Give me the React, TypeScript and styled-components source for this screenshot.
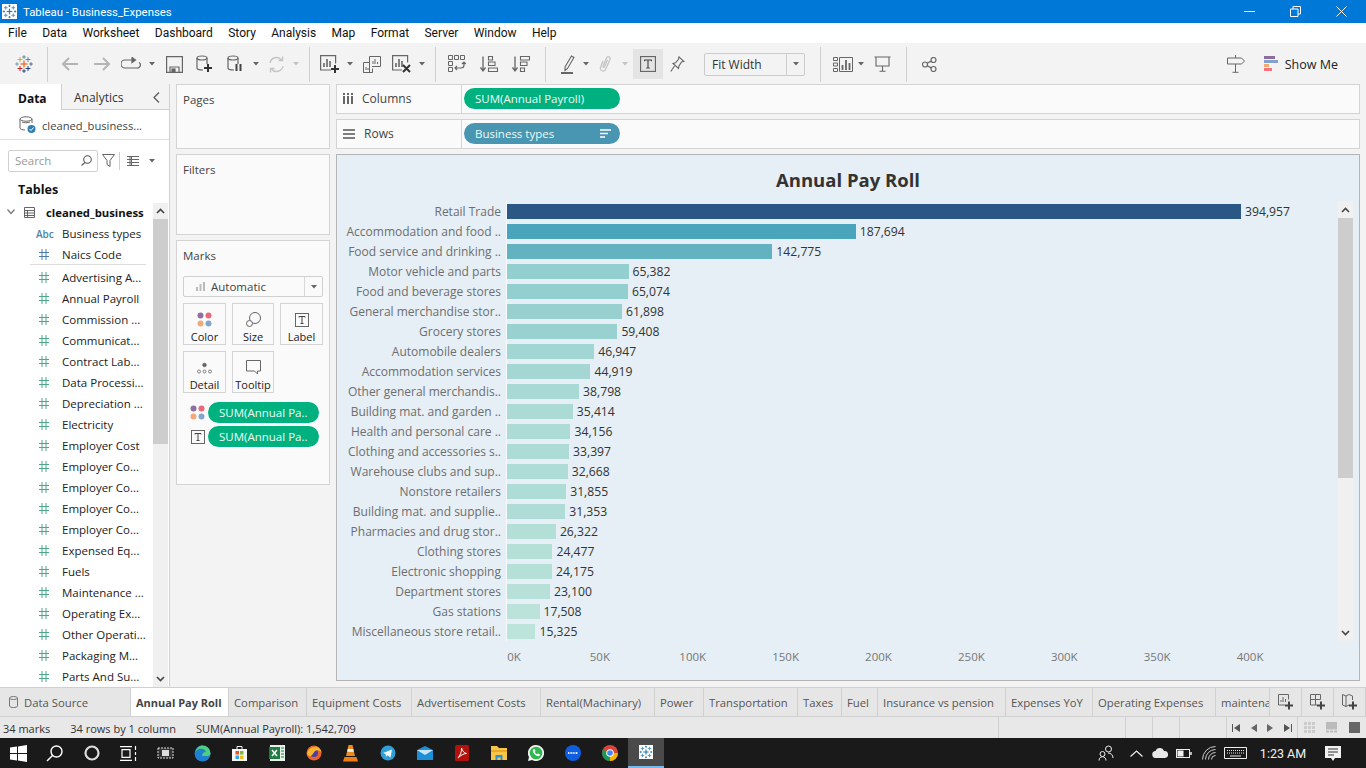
import * as React from 'react';
import styled, { createGlobalStyle } from 'styled-components';

const UI_FONT = `"Open Sans", "Noto Sans", "Liberation Sans", sans-serif`;
const SYSTEM_FONT = `Roboto, "Open Sans", "Liberation Sans", sans-serif`;

const GlobalStyle = createGlobalStyle`
  html, body { margin: 0; padding: 0; width: 1366px; height: 768px; overflow: hidden; }
  body { font-family: ${UI_FONT}; font-size: 12px; color: #333; }
  * { box-sizing: border-box; }
`;

const Page = styled.div`
  width: 1366px;
  height: 768px;
  display: flex;
  flex-direction: column;
  background: #f3f3f3;
  overflow: hidden;
`;

/* ---- title bar ---- */
const TitleBar = styled.div`
  height: 23px;
  flex: none;
  background: #0078d7;
  color: #fff;
  display: flex;
  align-items: center;
  padding: 0 2px;
  font-family: ${SYSTEM_FONT};
  font-size: 11.4px;
`;
const TitleText = styled.span`
  margin-left: 6px;
  flex: 1;
`;
const WinButton = styled.div`
  width: 46px;
  height: 23px;
  display: flex;
  align-items: center;
  justify-content: center;
`;

/* ---- menu ---- */
const MenuBar = styled.div`
  height: 20px;
  flex: none;
  background: #fff;
  display: flex;
  align-items: center;
  gap: 15.4px;
  padding-left: 8px;
  color: #111;
  font-family: ${SYSTEM_FONT};
  font-size: 12px;
`;

/* ---- toolbar ---- */
const Toolbar = styled.div`
  height: 41px;
  flex: none;
  display: flex;
  align-items: center;
  background: #f3f3f3;
  padding-top: 1px;
`;
const Tool = styled.div<{ $w: number; $ml?: number; $on?: boolean }>`
  width: ${p => p.$w}px;
  height: 30px;
  flex: none;
  margin-left: ${p => p.$ml ?? 0}px;
  display: flex;
  align-items: center;
  justify-content: center;
  background: ${p => (p.$on ? '#e4e4e4' : 'transparent')};
`;
const ToolSep = styled.div<{ $ml?: number }>`
  width: 1px;
  height: 35px;
  flex: none;
  margin-left: ${p => p.$ml ?? 0}px;
  background: #d0d0d0;
`;
const SearchSep = styled(ToolSep)`
  height: 18px;
`;
const FitSelect = styled.div`
  width: 101px;
  height: 23px;
  flex: none;
  margin-left: 13px;
  border: 1px solid #ccc;
  border-radius: 2px;
  display: flex;
  align-items: center;
  justify-content: space-between;
  padding-left: 7px;
  color: #333;
  font-size: 12px;
`;
const FitArrow = styled.div`
  width: 18px;
  height: 21px;
  border-left: 1px solid #ccc;
  display: flex;
  align-items: center;
  justify-content: center;
`;
const ToolRight = styled.div`
  margin-left: auto;
  display: flex;
  align-items: center;
  padding-right: 28px;
`;
const ShowMe = styled.div`
  margin-left: 14px;
  display: flex;
  align-items: center;
  gap: 6px;
  color: #222;
  font-size: 12.5px;
`;

/* ---- main ---- */
const Main = styled.div`
  height: 603px;
  flex: none;
  display: flex;
`;
const DataPane = styled.div`
  width: 170px;
  flex: none;
  background: #fff;
  border-right: 1px solid #d0d0d0;
  display: flex;
  flex-direction: column;
  overflow: hidden;
`;
const PaneTabs = styled.div`
  height: 26px;
  flex: none;
  display: flex;
`;
const PaneTab = styled.div<{ $on?: boolean }>`
  width: ${p => (p.$on ? 61 : 108)}px;
  display: flex;
  align-items: center;
  font-size: 12px;
  padding: 2px 0 0 ${p => (p.$on ? 18 : 12)}px;
  font-weight: ${p => (p.$on ? 700 : 400)};
  color: ${p => (p.$on ? '#111' : '#333')};
  background: ${p => (p.$on ? '#fff' : '#f3f3f3')};
  border-left: ${p => (p.$on ? 'none' : '1px solid #d0d0d0')};
  border-bottom: ${p => (p.$on ? 'none' : '1px solid #d0d0d0')};
  gap: 30px;
  white-space: nowrap;
`;
const SourceRow = styled.div`
  height: 30px;
  flex: none;
  display: flex;
  align-items: center;
  padding: 1px 0 0 19px;
  gap: 6px;
  border-bottom: 1px solid #e0e0e0;
  font-size: 11.2px;
  color: #444;
`;
const SearchRow = styled.div`
  height: 33px;
  flex: none;
  padding: 8px 0 0 8px;
  display: flex;
  align-items: center;
`;
const SearchBox = styled.div`
  width: 90px;
  height: 22px;
  border: 1px solid #d0d0d0;
  border-radius: 2px;
  display: flex;
  align-items: center;
  justify-content: space-between;
  padding: 0 5px 0 6px;
  color: #9a9a9a;
  font-size: 11.5px;
`;
const PaneHeading = styled.div`
  height: 30px;
  flex: none;
  padding: 8px 0 0 18px;
  font-size: 12.5px;
  font-weight: 700;
  color: #111;
`;
const TreeWrap = styled.div`
  flex: 1;
  display: flex;
  min-height: 0;
`;
const Tree = styled.div`
  width: 153px;
  flex: none;
`;
const TreeHead = styled.div`
  height: 20px;
  display: flex;
  align-items: center;
  padding: 0 0 2px 7px;
  font-weight: 700;
  font-size: 11.3px;
  color: #111;
  white-space: nowrap;
`;
const TreeHeadName = styled.span`
  margin-left: 11px;
`;
const Field = styled.div<{ $rule?: boolean }>`
  height: 21px;
  margin-bottom: ${p => (p.$rule ? 2 : 0)}px;
  display: flex;
  align-items: center;
  color: #222;
  font-size: 11.5px;
  white-space: nowrap;
  position: relative;
  &::after {
    content: '';
    display: ${p => (p.$rule ? 'block' : 'none')};
    position: absolute;
    left: 30px;
    right: 7px;
    bottom: 0;
    height: 1px;
    background: #ddd;
  }
`;
const FieldGlyph = styled.div<{ $small?: boolean }>`
  width: 62px;
  flex: none;
  padding-left: ${p => (p.$small ? 36 : 39)}px;
  font-size: 10px;
  font-weight: 600;
  color: #4a85ad;
  line-height: 1;
  display: flex;
  align-items: center;
`;
const VScroll = styled.div`
  width: 15px;
  flex: none;
  background: #f0f0f0;
  display: flex;
  flex-direction: column;
`;
const ScrollEnd = styled.div<{ $h?: number }>`
  height: ${p => p.$h ?? 16}px;
  flex: none;
  display: flex;
  align-items: center;
  justify-content: center;
`;
const ScrollThumb = styled.div<{ $h: number }>`
  height: ${p => p.$h}px;
  flex: none;
  background: #cdcdcd;
`;
const ScrollTrack = styled.div`
  flex: 1;
`;

/* ---- cards column ---- */
const CardColumn = styled.div`
  width: 154px;
  margin-left: 6px;
  flex: none;
  display: flex;
  flex-direction: column;
  gap: 5px;
`;
const Card = styled.div<{ $h: number }>`
  height: ${p => p.$h}px;
  flex: none;
  background: #fafafa;
  border: 1px solid #d4d4d4;
  padding: 7px 6px 0;
  color: #444;
  font-size: 11.5px;
`;
const MarkSelect = styled.div`
  width: 140px;
  height: 21px;
  margin-top: 13px;
  border: 1px solid #d0d0d0;
  border-radius: 2px;
  display: flex;
  align-items: center;
  padding-left: 12px;
  gap: 6px;
  color: #444;
  font-size: 11.5px;
`;
const MarkSelectArrow = styled.div`
  margin-left: auto;
  width: 18px;
  height: 19px;
  border-left: 1px solid #d8d8d8;
  display: flex;
  align-items: center;
  justify-content: center;
`;
const MarkGrid = styled.div`
  margin-top: 6px;
  display: grid;
  grid-template-columns: 43px 42px 43px;
  grid-auto-rows: 42px;
  column-gap: 6px;
  row-gap: 6px;
`;
const MarkButton = styled.div`
  border: 1px solid #d4d4d4;
  display: flex;
  flex-direction: column;
  align-items: center;
  justify-content: flex-end;
  gap: 2px;
  color: #222;
  font-size: 11px;
  line-height: 15px;
`;
const MarkPills = styled.div`
  margin-top: 9px;
  display: flex;
  flex-direction: column;
  gap: 3px;
`;
const MarkPillRow = styled.div`
  display: flex;
  align-items: center;
  height: 21px;
  padding-left: 7px;
  gap: 3px;
`;
const MarkPillIcon = styled.div`
  width: 15px;
  flex: none;
  display: flex;
  justify-content: center;
`;
const Pill = styled.div<{ $bg: string; $w: number }>`
  width: ${p => p.$w}px;
  height: 21px;
  flex: none;
  border-radius: 11px;
  background: ${p => p.$bg};
  color: #eefaf6;
  font-size: 11.5px;
  display: flex;
  align-items: center;
  justify-content: space-between;
  padding: 0 9px 0 11px;
  white-space: nowrap;
`;

/* ---- right side ---- */
const WorkColumn = styled.div`
  width: 1024px;
  margin-left: 6px;
  flex: none;
  display: flex;
  flex-direction: column;
`;
const Shelf = styled.div`
  height: 30px;
  flex: none;
  margin-bottom: 5px;
  padding-bottom: 1px;
  background: #fafafa;
  border: 1px solid #d4d4d4;
  display: flex;
  align-items: center;
`;
const ShelfLabel = styled.div`
  width: 125px;
  height: 28px;
  flex: none;
  border-right: 1px solid #d4d4d4;
  margin-right: 2px;
  display: flex;
  align-items: center;
  padding-left: 6px;
  gap: 9px;
  color: #444;
  font-size: 12px;
`;
const Viz = styled.div`
  height: 527px;
  flex: none;
  background: #e6eff5;
  border: 1px solid #b4b4b4;
  display: flex;
  flex-direction: column;
`;
const VizTitle = styled.div`
  height: 46px;
  flex: none;
  display: flex;
  align-items: center;
  justify-content: center;
  font-size: 18.5px;
  font-weight: 700;
  color: #333;
  padding-top: 2px;
`;
const VizBody = styled.div`
  height: 440px;
  flex: none;
  display: flex;
  padding-right: 6px;
`;
const BarList = styled.div`
  flex: 1;
`;
const BarRow = styled.div`
  height: 20px;
  display: flex;
  align-items: center;
`;
const BarName = styled.div`
  width: 164px;
  flex: none;
  margin-right: 5px;
  text-align: right;
  color: #6e6e6e;
  font-size: 12px;
  white-space: nowrap;
`;
const BarCell = styled.div`
  height: 20px;
  flex: 1;
  padding-top: 3px;
  border-left: 1px solid #f7fafc;
  display: flex;
  align-items: flex-start;
`;
const Bar = styled.div`
  height: 15px;
  flex: none;
`;
const BarValue = styled.span`
  margin-left: 4px;
  color: #333;
  font-size: 12.2px;
  line-height: 15px;
`;
const Axis = styled.div`
  flex: 1;
  display: flex;
  align-items: center;
  padding: 0 0 9px 123.5px;
  color: #777;
  font-size: 11.5px;
`;
const AxisTick = styled.div<{ $first?: boolean }>`
  width: 92.9px;
  flex: none;
  text-align: center;
  padding-left: ${p => (p.$first ? 14 : 0)}px;
`;

/* ---- sheet tabs and status ---- */
const TabBar = styled.div`
  height: 30px;
  flex: none;
  display: flex;
  background: #e6e6e6;
  border-top: 1px solid #d0d0d0;
  border-bottom: 1px solid #d0d0d0;
  overflow: hidden;
`;
const SheetTab = styled.div<{ $w: number; $on?: boolean }>`
  width: ${p => p.$w}px;
  flex: none;
  display: flex;
  align-items: center;
  justify-content: center;
  gap: 6px;
  overflow: hidden;
  white-space: nowrap;
  border-right: 1px solid #d0d0d0;
  background: ${p => (p.$on ? '#fff' : 'transparent')};
  color: ${p => (p.$on ? '#444' : '#555')};
  font-weight: ${p => (p.$on ? 700 : 400)};
  font-size: ${p => (p.$on ? 11 : 11.3)}px;
`;
const TextTab = styled(SheetTab)`
  justify-content: flex-start;
  padding-left: 5px;
`;
const SourceTab = styled(SheetTab)`
  justify-content: flex-start;
  padding-left: 9px;
`;
const StatusBar = styled.div`
  height: 21px;
  flex: none;
  display: flex;
  align-items: stretch;
  background: #e8e8e8;
  color: #333;
  font-size: 11px;
`;
const StatusCell = styled.div<{ $w: number; $line?: boolean }>`
  width: ${p => p.$w}px;
  flex: none;
  display: flex;
  align-items: center;
  justify-content: space-around;
  border-right: ${p => (p.$line ? '1px solid #d0d0d0' : 'none')};
`;
const StatusText = styled.div`
  width: 999px;
  flex: none;
  display: flex;
  align-items: center;
  border-right: 1px solid #d0d0d0;
  padding: 1px 0 0 3px;
  gap: 20px;
`;

/* ---- taskbar ---- */
const Taskbar = styled.div`
  height: 30px;
  flex: none;
  display: flex;
  align-items: center;
  background: #1a1a1a;
  color: #fff;
`;
const TaskIcon = styled.div<{ $w?: number; $on?: boolean }>`
  width: ${p => p.$w ?? 37}px;
  height: 30px;
  flex: none;
  display: flex;
  align-items: center;
  justify-content: center;
  background: ${p => (p.$on ? '#4a4a4a' : 'transparent')};
  border-bottom: ${p => (p.$on ? '2px solid #76b9ed' : 'none')};
`;
const Tray = styled.div`
  margin-left: auto;
  display: flex;
  align-items: center;
`;
const Clock = styled.div`
  width: 70px;
  text-align: center;
  font-family: ${SYSTEM_FONT};
  font-size: 12.5px;
  color: #f2f2f2;
`;

/* ---- drawings ---- */
const Svg: React.FC<{ w?: number; h?: number; c?: string; sw?: number; children: React.ReactNode }> = ({
  w = 20, h = 20, c = '#666', sw = 1.2, children,
}) => (
  <svg width={w} height={h} viewBox={`0 0 ${w} ${h}`} fill="none" stroke={c} strokeWidth={sw}>
    {children}
  </svg>
);

const Caret: React.FC<{ c?: string }> = ({ c = '#666' }) => (
  <svg width="6" height="4" viewBox="0 0 6 4"><path d="M0 0h6L3 3.5z" fill={c} /></svg>
);

const Hash: React.FC<{ c: string }> = ({ c }) => (
  <Svg w={10} h={11} c={c} sw={1}><path d="M3 0v11M7 0v11M0 3.5h10M0 7.5h10" /></Svg>
);

const Cross: React.FC<{ x: number; y: number; r: number; c: string; t?: number }> = ({ x, y, r, c, t = 1 }) => (
  <g fill={c} stroke="none">
    <rect x={x - r} y={y - t / 2} width={r * 2} height={t} />
    <rect x={x - t / 2} y={y - r} width={t} height={r * 2} />
  </g>
);

const TableauMark: React.FC = () => (
  <svg width="18" height="18" viewBox="0 0 18 18">
    <Cross x={9} y={9} r={3.5} c="#e8762b" t={1.4} />
    <Cross x={5} y={4.5} r={2.5} c="#e8a13a" />
    <Cross x={13} y={4.5} r={2.5} c="#5b879b" />
    <Cross x={5} y={13.5} r={2.5} c="#c72035" />
    <Cross x={13} y={13.5} r={2.5} c="#1f447e" />
    <Cross x={9} y={2} r={1.8} c="#59879b" />
    <Cross x={2} y={9} r={1.8} c="#7099a6" />
    <Cross x={16} y={9} r={1.8} c="#5b6591" />
    <Cross x={9} y={16} r={1.8} c="#1f447e" />
  </svg>
);

const TableauTile: React.FC<{ size: number }> = ({ size }) => (
  <svg width={size} height={size} viewBox="0 0 16 16">
    <rect width="16" height="16" fill="#fff" />
    <Cross x={8} y={8} r={3} c="#2f7fb5" t={1.3} />
    <Cross x={4} y={4} r={2} c="#4d94bf" />
    <Cross x={12} y={4} r={2} c="#4d94bf" />
    <Cross x={4} y={12} r={2} c="#4d94bf" />
    <Cross x={12} y={12} r={2} c="#4d94bf" />
    <Cross x={8} y={2} r={1.2} c="#2f7fb5" />
    <Cross x={8} y={14} r={1.2} c="#2f7fb5" />
    <Cross x={2} y={8} r={1.2} c="#2f7fb5" />
    <Cross x={14} y={8} r={1.2} c="#2f7fb5" />
  </svg>
);

const PlusMark: React.FC<{ x: number; y: number; c?: string }> = ({ x, y, c = '#333' }) => (
  <path d={`M${x - 4} ${y}h8M${x} ${y - 4}v8`} stroke={c} strokeWidth="2" />
);

const ColorDots: React.FC = () => (
  <svg width="15" height="15" viewBox="0 0 15 15">
    <circle cx="3.5" cy="3.5" r="3" fill="#8e6f9f" />
    <circle cx="11.5" cy="3.5" r="3" fill="#e9697a" />
    <circle cx="3.5" cy="11.5" r="3" fill="#f2a97a" />
    <circle cx="11.5" cy="11.5" r="3" fill="#82a6cc" />
  </svg>
);

const TextBox: React.FC<{ s?: number }> = ({ s = 14 }) => (
  <svg width={s} height={s} viewBox="0 0 14 14" fill="none">
    <rect x="0.5" y="0.5" width="13" height="13" stroke="#666" />
    <path d="M4 4.5v-1h6v1M7 3.5v7M5.5 10.5h3" stroke="#444" />
  </svg>
);

const toolIcons = {
  back: (
    <Svg w={18} h={16} c="#b4b4b4" sw={2}><path d="M17 8H2M8 2L2 8l6 6" /></Svg>
  ),
  forward: (
    <Svg w={18} h={16} c="#b4b4b4" sw={2}><path d="M1 8h15M10 2l6 6-6 6" /></Svg>
  ),
  loop: (
    <Svg w={20} h={14}><path d="M12 3H4a3.5 3.5 0 0 0 0 8h12a3 3 0 0 0 2-5.5" /><path d="M11 0.5l3.5 2.5-3.5 2.5z" fill="#666" /></Svg>
  ),
  save: (
    <Svg w={17} h={17}><path d="M.6.6h15.8v15.8H.6z" /><path d="M4 16v-5h9v5" /><rect x="6" y="13" width="3" height="3" fill="#666" /></Svg>
  ),
  newData: (
    <Svg w={18} h={18}>
      <ellipse cx="6" cy="3" rx="5" ry="2" />
      <path d="M1 3v10c0 1 2 2 6 2M11 3v6" />
      <PlusMark x={12} y={13} />
    </Svg>
  ),
  pause: (
    <Svg w={18} h={18}>
      <ellipse cx="6" cy="3" rx="5" ry="2" />
      <path d="M1 3v10c0 1 2 2 6 2M11 3v6" />
      <path d="M9.5 9v7M13.5 9v7" stroke="#444" strokeWidth="2" />
    </Svg>
  ),
  refresh: (
    <Svg w={17} h={17} c="#c4c4c4" sw={1.4}>
      <path d="M2 7a6.5 6.5 0 0 1 11.5-3M15 10a6.5 6.5 0 0 1-11.5 3" />
      <path d="M14.5 0.5v4h-4M2.5 16.5v-4h4" />
    </Svg>
  ),
  newSheet: (
    <Svg w={20} h={18}>
      <path d="M11 15H.6V.6h15v8" />
      <path d="M4 12V8M7 12V4M10 12V6" strokeWidth="1.6" />
      <PlusMark x={15} y={14} />
    </Svg>
  ),
  duplicate: (
    <Svg w={18} h={17} sw={1}>
      <path d="M6.5 10V.5h11v10H9" />
      <path d="M.5 6.5h6v10h-6zM3 14v-3M5 14v-2" />
      <path d="M10 8V5M12 8V3M14.5 8V6" />
      <path d="M.5 16.5h9v-4" />
    </Svg>
  ),
  clear: (
    <Svg w={20} h={18}>
      <path d="M10 15H.6V.6h15v7" />
      <path d="M4 12V8M7 12V4M10 12V6" strokeWidth="1.6" />
      <path d="M11 10l7 7M18 10l-7 7" stroke="#333" strokeWidth="2" />
    </Svg>
  ),
  swap: (
    <Svg w={18} h={18} sw={1}>
      <path d="M.5.5h4v4h-4zM6.5.5h4v4h-4zM12.5.5h4v4h-4zM.5 6.5h4v4h-4zM.5 12.5h4v4h-4z" />
      <path d="M7 13h6a3 3 0 0 0 3-3V7M14 9l2-2 2 2M9 11l-2 2 2 2" strokeWidth="1.2" />
    </Svg>
  ),
  sortAsc: (
    <Svg w={18} h={17} sw={1.1}>
      <path d="M3 .5v14M.5 11.5L3 15l2.5-3.5" strokeWidth="1.3" />
      <path d="M8.5.5h4V4h-4zM8.5 6H15v3.5H8.5zM8.5 12h9v3.5h-9z" />
    </Svg>
  ),
  sortDesc: (
    <Svg w={18} h={17} sw={1.1}>
      <path d="M3 .5v14M.5 11.5L3 15l2.5-3.5" strokeWidth="1.3" />
      <path d="M8.5.5h9V4h-9zM8.5 6H15v3.5H8.5zM8.5 12h4v3.5h-4z" />
    </Svg>
  ),
  highlight: (
    <Svg w={14} h={19} sw={1.1}>
      <path d="M4 12L10.5 1 13 2.5 6.5 13.5 4 15.5z" />
      <path d="M0 18h12" stroke="#666" strokeWidth="2" />
    </Svg>
  ),
  clip: (
    <Svg w={13} h={19} c="#c4c4c4" sw={1.3}>
      <path d="M4 6L1.5 12.5c-1 3 3.5 5 5 2L11 4.5c1-2.5-2.5-4-3.5-1.5L4 11c-.5 1.2 1 2 1.5.8L8.5 5" />
    </Svg>
  ),
  pin: (
    <Svg w={15} h={17} sw={1.1}>
      <path d="M9 .8l5 4.7-2.5.5-2.5 4-.5 2.5-5.5-5 2.5-.7 3-3.5zM4.5 10L.8 15.5" />
    </Svg>
  ),
  cards: (
    <Svg w={20} h={15} sw={1}>
      <path d="M.5.5h4v3h-4zM.5 6h4v3h-4zM.5 11.5h4v3h-4zM6.5.5h13v14h-13z" />
      <path d="M9.5 13V8M13 13V3M16.5 13V6" strokeWidth="1.8" />
    </Svg>
  ),
  present: (
    <Svg w={17} h={16} sw={1.1}>
      <path d="M.5 1h16M2 1v9h13V1M8.5 10v5M5.5 15.3h6" />
    </Svg>
  ),
  share: (
    <Svg w={15} h={15} sw={1.2}>
      <circle cx="3" cy="7.5" r="2.5" /><circle cx="11.5" cy="3" r="2.5" /><circle cx="11.5" cy="12" r="2.5" />
      <path d="M5.2 6.3l4-2.2M5.2 8.7l4 2.2" />
    </Svg>
  ),
  signpost: (
    <Svg w={18} h={18} sw={1}>
      <path d="M.5 3h14l3 3-3 3H.5zM8.5 0v3M8.5 9v8M5.5 17.3h6" />
    </Svg>
  ),
};

const ShowMeIcon: React.FC = () => (
  <svg width="15" height="16" viewBox="0 0 15 16">
    <rect width="11" height="3" fill="#8a6f9c" />
    <rect y="4" width="14" height="3" fill="#82a3c9" />
    <rect y="8" width="5" height="3" fill="#f4a96f" />
    <rect y="12" width="8" height="3" fill="#f4737f" />
  </svg>
);

const taskIcons: React.ReactNode[] = [
  <svg key="win" width="17" height="17" viewBox="0 0 17 17"><path d="M0 2.5l7-1V8H0zM8 1.4L17 0v8H8zM0 9h7v6.5l-7-1zM8 9h9v8l-9-1.4z" fill="#fff" /></svg>,
  <svg key="search" width="17" height="17" viewBox="0 0 17 17" fill="none" stroke="#fff" strokeWidth="1.4"><circle cx="10.5" cy="6.5" r="5.5" /><path d="M6.5 10.5L1 16" /></svg>,
  <svg key="cortana" width="16" height="16" viewBox="0 0 16 16" fill="none" stroke="#ddd" strokeWidth="2.2"><circle cx="8" cy="8" r="6.5" /></svg>,
  <svg key="view" width="17" height="15" viewBox="0 0 17 15" fill="none" stroke="#fff" strokeWidth="1.2"><path d="M0 .6h12M0 14.4h12M2 3.6h8v7.8H2zM15.5 0v4M15.5 6v3M15.5 11v4" /></svg>,
  <svg key="ai" width="17" height="12" viewBox="0 0 17 12"><rect x="1" y="1" width="15" height="10" fill="#333" stroke="#ddd" strokeDasharray="2 1" /><rect x="5" y="3" width="7" height="6" fill="#ddd" /></svg>,
  <svg key="edge" width="17" height="17" viewBox="0 0 17 17"><circle cx="8.5" cy="8.5" r="8" fill="#1f7fd1" /><path d="M8.5 .5a8 8 0 0 1 8 8c0 2-2 2.5-4 2.5H8c0-3 2.5-4.5 4-4-1-3-4-4-7-3-1.5.5-3 2-3.5 3C2.5 3 5 .5 8.5.5z" fill="#4fcf7e" /></svg>,
  <svg key="store" width="15" height="16" viewBox="0 0 15 16"><path d="M0 4h15v12H0z" fill="#f5f5f5" /><path d="M5 4V1.5h5V4" stroke="#f5f5f5" fill="none" /><rect x="3.5" y="6" width="3.5" height="3.5" fill="#e4532b" /><rect x="8" y="6" width="3.5" height="3.5" fill="#7db83f" /><rect x="3.5" y="10.5" width="3.5" height="3.5" fill="#2ea3e6" /><rect x="8" y="10.5" width="3.5" height="3.5" fill="#f5b91c" /></svg>,
  <svg key="excel" width="16" height="16" viewBox="0 0 16 16"><rect x="1" y="0" width="15" height="16" fill="#e9f2ea" /><rect x="0" y="2" width="11" height="12" fill="#1f7d43" /><path d="M3 5l5 6M8 5l-5 6" stroke="#fff" strokeWidth="1.5" /><path d="M12 3h3M12 6h3M12 9h3M12 12h3" stroke="#1f7d43" /></svg>,
  <svg key="firefox" width="16" height="16" viewBox="0 0 16 16"><circle cx="8" cy="8" r="7.5" fill="#e8622a" /><circle cx="8" cy="8" r="4" fill="#4b3ea5" /><path d="M1 9c1-5 5-8 10-7 3 1 4.5 4 4.5 6-1-2-3-3-5-2.5-3 .5-3 5-7 6z" fill="#f8b62c" /></svg>,
  <svg key="vlc" width="15" height="17" viewBox="0 0 15 17"><path d="M5.5 0h4L12 11H3z" fill="#f08a1d" /><path d="M4.8 4h5.4l.6 2.8H4.2z" fill="#f5f5f5" /><path d="M1.5 12h12l1.500 4.5H0z" fill="#ef7f14" /></svg>,
  <svg key="telegram" width="16" height="16" viewBox="0 0 16 16"><circle cx="8" cy="8" r="7.5" fill="#2f9fd8" /><path d="M3 8l9-3.5-1.5 8-3-2.2L6 12l-.5-3z" fill="#f2f7fa" /></svg>,
  <svg key="mail" width="16" height="14" viewBox="0 0 16 14"><path d="M0 4l8-4 8 4v10H0z" fill="#1b8fd8" /><path d="M0 4l8 5 8-5" fill="#c9e6f8" /></svg>,
  <svg key="acrobat" width="14" height="16" viewBox="0 0 14 16"><rect width="14" height="16" rx="1.5" fill="#b3120c" /><path d="M3 13c2-2 4-7 3.5-10 1 3 2.5 5 5 5.5-3 0-6 2-8.5 4.5z" fill="none" stroke="#fff" /></svg>,
  <svg key="explorer" width="16" height="14" viewBox="0 0 16 14"><path d="M0 0h6l2 2h8v12H0z" fill="#f7c646" /><rect x="0" y="4" width="16" height="2" fill="#e8a82c" /><path d="M4.5 14V9h7v5h-2v-2.5h-3V14z" fill="#2e8fd6" /></svg>,
  <svg key="wa" width="16" height="16" viewBox="0 0 16 16"><path d="M8 0a8 8 0 1 1-3.800 15L0 16l1-4A8 8 0 0 1 8 0z" fill="#f2f2f2" /><circle cx="8" cy="8" r="6.3" fill="#2fb84f" /><path d="M5 4.5c-1 3 3 7.5 6.5 6.5l.5-1.500-2-1-1 .8c-1-.4-1.800-1.300-2.200-2.300l.8-1-1-2z" fill="#fff" /></svg>,
  <svg key="zoom" width="16" height="16" viewBox="0 0 16 16"><circle cx="8" cy="8" r="8" fill="#0f5ee0" /><path d="M3 8h10" stroke="#dfe9ff" strokeWidth="2" strokeDasharray="1 .6" /></svg>,
  <svg key="chrome" width="16" height="16" viewBox="0 0 16 16"><circle cx="8" cy="8" r="8" fill="#db4437" /><path d="M8 8L1 4.500A8 8 0 0 0 8 16z" fill="#0f9d58" /><path d="M8 8h8a8 8 0 0 1-8 8z" fill="#f4b400" /><circle cx="8" cy="8" r="3.8" fill="#fff" /><circle cx="8" cy="8" r="2.8" fill="#4285f4" /></svg>,
];

/* ---- data ---- */
const bars: Array<[string, number, string]> = [
  ['Retail Trade', 394957, '#2a5783'],
  ['Accommodation and food ..', 187694, '#4aa5bc'],
  ['Food service and drinking ..', 142775, '#63b2c2'],
  ['Motor vehicle and parts', 65382, '#94cfcf'],
  ['Food and beverage stores', 65074, '#94cfcf'],
  ['General merchandise stor..', 61898, '#97d0cf'],
  ['Grocery stores', 59408, '#99d1d0'],
  ['Automobile dealers', 46947, '#a2d6d2'],
  ['Accommodation services', 44919, '#a4d7d3'],
  ['Other general merchandis..', 38798, '#a9d9d4'],
  ['Building mat. and garden ..', 35414, '#acdbd5'],
  ['Health and personal care ..', 34156, '#addbd5'],
  ['Clothing and accessories s..', 33397, '#addbd5'],
  ['Warehouse clubs and sup..', 32668, '#aedcd6'],
  ['Nonstore retailers', 31855, '#aedcd6'],
  ['Building mat. and supplie..', 31353, '#afdcd6'],
  ['Pharmacies and drug stor..', 26322, '#b3dfd7'],
  ['Clothing stores', 24477, '#b5e0d8'],
  ['Electronic shopping', 24175, '#b5e0d8'],
  ['Department stores', 23100, '#b6e0d8'],
  ['Gas stations', 17508, '#bbe3da'],
  ['Miscellaneous store retail..', 15325, '#bde4db'],
];

const fields: string[] = [
  'Advertising A...', 'Annual Payroll', 'Commission ...', 'Communicat...', 'Contract Lab...',
  'Data Processi...', 'Depreciation ...', 'Electricity', 'Employer Cost', 'Employer Co...',
  'Employer Co...', 'Employer Co...', 'Employer Co...', 'Expensed Eq...', 'Fuels',
  'Maintenance ...', 'Operating Ex...', 'Other Operati...', 'Packaging M...', 'Parts And Su...',
];

const sheetTabs: Array<[string, number]> = [
  ['Comparison', 78], ['Equipment Costs', 105], ['Advertisement Costs', 129], ['Rental(Machinary)', 114],
  ['Power', 49], ['Transportation', 94], ['Taxes', 44], ['Fuel', 36], ['Insurance vs pension', 128],
  ['Expenses YoY', 87], ['Operating Expenses', 123], ['maintenance', 54],
];

const menus = ['File', 'Data', 'Worksheet', 'Dashboard', 'Story', 'Analysis', 'Map', 'Format', 'Server', 'Window', 'Help'];

const ScrollUp = () => <Svg w={9} h={6} c="#444" sw={1.6}><path d="M1 5l3.5-3.5L8 5" /></Svg>;
const ScrollDown = () => <Svg w={9} h={6} c="#444" sw={1.6}><path d="M1 1l3.5 3.5L8 1" /></Svg>;

const App: React.FC = () => (
  <Page>
    <GlobalStyle />
    <TitleBar>
      <TableauTile size={15} />
      <TitleText>Tableau - Business_Expenses</TitleText>
      <WinButton><Svg w={11} h={11} c="#fff" sw={1}><path d="M0 5.5h11" /></Svg></WinButton>
      <WinButton><Svg w={11} h={11} c="#fff" sw={1}><path d="M.5 3H8v7.500H.5zM3 3V.5h7.500V8H8" /></Svg></WinButton>
      <WinButton><Svg w={11} h={11} c="#fff" sw={1}><path d="M.5.5l10 10M10.5.5l-10 10" /></Svg></WinButton>
    </TitleBar>

    <MenuBar>
      {menus.map(m => <span key={m}>{m}</span>)}
    </MenuBar>

    <Toolbar>
      <Tool $w={47}><TableauMark /></Tool>
      <ToolSep />
      <Tool $w={32} $ml={6}>{toolIcons.back}</Tool>
      <Tool $w={32}>{toolIcons.forward}</Tool>
      <Tool $w={26}>{toolIcons.loop}</Tool>
      <Tool $w={16}><Caret /></Tool>
      <Tool $w={28}>{toolIcons.save}</Tool>
      <Tool $w={34}>{toolIcons.newData}</Tool>
      <Tool $w={28}>{toolIcons.pause}</Tool>
      <Tool $w={12}><Caret /></Tool>
      <Tool $w={28}>{toolIcons.refresh}</Tool>
      <Tool $w={12}><Caret c="#c4c4c4" /></Tool>
      <ToolSep $ml={7} />
      <Tool $w={28} $ml={6}>{toolIcons.newSheet}</Tool>
      <Tool $w={12}><Caret /></Tool>
      <Tool $w={32}>{toolIcons.duplicate}</Tool>
      <Tool $w={28}>{toolIcons.clear}</Tool>
      <Tool $w={12}><Caret /></Tool>
      <ToolSep $ml={7} />
      <Tool $w={32} $ml={5}>{toolIcons.swap}</Tool>
      <Tool $w={32}>{toolIcons.sortAsc}</Tool>
      <Tool $w={32}>{toolIcons.sortDesc}</Tool>
      <ToolSep $ml={8} />
      <Tool $w={28} $ml={8}>{toolIcons.highlight}</Tool>
      <Tool $w={8}><Caret /></Tool>
      <Tool $w={30}>{toolIcons.clip}</Tool>
      <Tool $w={10}><Caret c="#c4c4c4" /></Tool>
      <Tool $w={30} $ml={3} $on><TextBox s={16} /></Tool>
      <Tool $w={28}>{toolIcons.pin}</Tool>
      <FitSelect>Fit Width<FitArrow><Caret /></FitArrow></FitSelect>
      <ToolSep $ml={15} />
      <Tool $w={28} $ml={8}>{toolIcons.cards}</Tool>
      <Tool $w={8}><Caret /></Tool>
      <Tool $w={32} $ml={1}>{toolIcons.present}</Tool>
      <ToolSep $ml={8} />
      <Tool $w={28} $ml={8}>{toolIcons.share}</Tool>
      <ToolRight>
        <Tool $w={28}>{toolIcons.signpost}</Tool>
        <ShowMe><ShowMeIcon />Show Me</ShowMe>
      </ToolRight>
    </Toolbar>

    <Main>
      <DataPane>
        <PaneTabs>
          <PaneTab $on>Data</PaneTab>
          <PaneTab>
            Analytics
            <Svg w={7} h={11} c="#555" sw={1.2}><path d="M6 .5l-5 5 5 5" /></Svg>
          </PaneTab>
        </PaneTabs>
        <SourceRow>
          <Svg w={17} h={18} sw={1}>
            <ellipse cx="7" cy="3" rx="6" ry="2.2" />
            <path d="M1 3v9c0 1 2 2 5 2M13 3v4M3 6c1 1 6 1 8 0" />
            <circle cx="12.5" cy="13" r="4" fill="#2f7fb5" stroke="none" />
            <path d="M10.5 13l1.500 1.500 2.500-3" stroke="#fff" />
          </Svg>
          cleaned_business...
        </SourceRow>
        <SearchRow>
          <SearchBox>
            Search
            <Svg w={11} h={11} c="#555" sw={1.1}><circle cx="6.5" cy="4.5" r="3.8" /><path d="M4 7.5L.5 10.500" /></Svg>
          </SearchBox>
          <Tool $w={15} $ml={3}>
            <Svg w={13} h={13} c="#666" sw={1}><path d="M.5.5h12L8 6.500v6l-3-2v-4z" /></Svg>
          </Tool>
          <SearchSep $ml={3} />
          <Tool $w={17} $ml={4}>
            <Svg w={12} h={10} c="#666" sw={1}><path d="M0 .5h12M0 3.500h12M0 6.500h12M0 9.500h12M3 0v10M4.500 0v10" /></Svg>
          </Tool>
          <Tool $w={15} $ml={3}><Caret /></Tool>
        </SearchRow>
        <PaneHeading>Tables</PaneHeading>
        <TreeWrap>
          <Tree>
            <TreeHead>
              <Svg w={8} h={6} c="#777" sw={1.2}><path d="M.5.5L4 4.500 7.500.5" /></Svg>
              <Tool $w={12} $ml={8}>
                <Svg w={11} h={11} c="#666" sw={1}><path d="M.5.5h10v10H.5zM.5 3.500h10M.5 6h10M.5 8.500h10M3.500 3.500v7" /></Svg>
              </Tool>
              <TreeHeadName>cleaned_business</TreeHeadName>
            </TreeHead>
            <Field><FieldGlyph $small>Abc</FieldGlyph>Business types</Field>
            <Field $rule><FieldGlyph><Hash c="#4a7ea8" /></FieldGlyph>Naics Code</Field>
            {fields.map((f, i) => (
              <Field key={i}><FieldGlyph><Hash c="#4fa58a" /></FieldGlyph>{f}</Field>
            ))}
          </Tree>
          <VScroll>
            <ScrollEnd><ScrollUp /></ScrollEnd>
            <ScrollThumb $h={225} />
            <ScrollTrack />
            <ScrollEnd><ScrollDown /></ScrollEnd>
          </VScroll>
        </TreeWrap>
      </DataPane>

      <CardColumn>
        <Card $h={65}>Pages</Card>
        <Card $h={81}>Filters</Card>
        <Card $h={245}>
          Marks
          <MarkSelect>
            <Svg w={9} h={9} c="#bbb" sw={2}><path d="M1 9V5M4.500 9V2M8 9V0" /></Svg>
            Automatic
            <MarkSelectArrow><Caret /></MarkSelectArrow>
          </MarkSelect>
          <MarkGrid>
            <MarkButton><ColorDots />Color</MarkButton>
            <MarkButton>
              <Svg w={15} h={15} sw={1}><circle cx="9" cy="6" r="5.5" /><circle cx="3.5" cy="11.5" r="3" fill="#fafafa" /></Svg>
              Size
            </MarkButton>
            <MarkButton><TextBox />Label</MarkButton>
            <MarkButton>
              <Svg w={15} h={13} sw={.8}>
                <circle cx="7.5" cy="3" r="1.8" fill="#666" />
                <circle cx="2" cy="9.5" r="1.5" /><circle cx="7.5" cy="9.5" r="1.5" /><circle cx="13" cy="9.5" r="1.5" />
              </Svg>
              Detail
            </MarkButton>
            <MarkButton>
              <Svg w={15} h={15} sw={1}><path d="M.5.500h14V11h-3v3l-3-3H.5z" /></Svg>
              Tooltip
            </MarkButton>
          </MarkGrid>
          <MarkPills>
            <MarkPillRow>
              <MarkPillIcon><ColorDots /></MarkPillIcon>
              <Pill $bg="#00b180" $w={111}>SUM(Annual Pa..</Pill>
            </MarkPillRow>
            <MarkPillRow>
              <MarkPillIcon><TextBox /></MarkPillIcon>
              <Pill $bg="#00b180" $w={111}>SUM(Annual Pa..</Pill>
            </MarkPillRow>
          </MarkPills>
        </Card>
      </CardColumn>

      <WorkColumn>
        <Shelf>
          <ShelfLabel>
            <Svg w={10} h={11} c="#666" sw={2}><path d="M1 11V3M5 11V3M9 11V3" /><path d="M1 2V0M5 2V0M9 2V0" strokeWidth="2" /></Svg>
            Columns
          </ShelfLabel>
          <Pill $bg="#00b180" $w={156}>SUM(Annual Payroll)</Pill>
        </Shelf>
        <Shelf>
          <ShelfLabel>
            <Svg w={12} h={10} c="#555" sw={1.6}><path d="M0 1h12M0 5h12M0 9h12" /></Svg>
            Rows
          </ShelfLabel>
          <Pill $bg="#4996b2" $w={156}>
            Business types
            <Svg w={11} h={9} c="#fff" sw={1.4}><path d="M0 1h11M0 4.500h8M0 8h5" /></Svg>
          </Pill>
        </Shelf>
        <Viz>
          <VizTitle>Annual Pay Roll</VizTitle>
          <VizBody>
            <BarList>
              {bars.map(([name, value, colour]) => (
                <BarRow key={name}>
                  <BarName>{name}</BarName>
                  <BarCell>
                    <Bar style={{ width: (value * 734) / 394957, background: colour }} />
                    <BarValue>{value.toLocaleString('en-US')}</BarValue>
                  </BarCell>
                </BarRow>
              ))}
            </BarList>
            <VScroll>
              <ScrollEnd $h={17}><ScrollUp /></ScrollEnd>
              <ScrollThumb $h={260} />
              <ScrollTrack />
              <ScrollEnd><ScrollDown /></ScrollEnd>
            </VScroll>
          </VizBody>
          <Axis>
            {['0K', '50K', '100K', '150K', '200K', '250K', '300K', '350K', '400K'].map((t, i) => (
              <AxisTick key={t} $first={i === 0}>{t}</AxisTick>
            ))}
          </Axis>
        </Viz>
      </WorkColumn>
    </Main>

    <TabBar>
      <SourceTab $w={131}>
        <Svg w={9} h={12} c="#777" sw={1}><ellipse cx="4.5" cy="2" rx="4" ry="1.5" /><path d="M.5 2v8c0 2 8 2 8 0V2" /></Svg>
        Data Source
      </SourceTab>
      <TextTab $w={98} $on>Annual Pay Roll</TextTab>
      {sheetTabs.map(([t, w]) => <TextTab key={t} $w={w}>{t}</TextTab>)}
      {[0, 1, 2].map(i => (
        <SheetTab key={i} $w={32}>
          <Svg w={16} h={16} c="#666" sw={1}>
            {i === 0 && <path d="M7 11H.5V.5h10v5M3 8V6M5 8V3M7.5 8V5" />}
            {i === 1 && <path d="M7 11H.5V.5h10v5M.5 5.500h10M5.500.5V11" />}
            {i === 2 && <path d="M7 11L4 12.500V2L.5.5V11L4 12.500M4 2l3-1.500L10.500 2v4" />}
            <PlusMark x={11} y={11.5} c="#444" />
          </Svg>
        </SheetTab>
      ))}
    </TabBar>

    <StatusBar>
      <StatusText>
        <span>34 marks</span>
        <span>34 rows by 1 column</span>
        <span>SUM(Annual Payroll): 1,542,709</span>
      </StatusText>
      <StatusCell $w={127} $line />
      <StatusCell $w={27} $line />
      <StatusCell $w={27} $line />
      <StatusCell $w={47} $line />
      <StatusCell $w={71} $line>
        <Svg w={8} h={8} c="#555" sw={1}><path d="M.5 0v8" /><path d="M8 0L2 4l6 4z" fill="#555" stroke="none" /></Svg>
        <Svg w={6} h={8}><path d="M6 0L0 4l6 4z" fill="#666" stroke="none" /></Svg>
        <Svg w={6} h={8}><path d="M0 0l6 4-6 4z" fill="#666" stroke="none" /></Svg>
        <Svg w={8} h={8} c="#555" sw={1}><path d="M7.500 0v8" /><path d="M0 0l6 4-6 4z" fill="#555" stroke="none" /></Svg>
      </StatusCell>
      <StatusCell $w={68}>
        <Svg w={11} h={11} c="#ccc" sw={3}><path d="M0 1.500h11M0 5.500h11M0 9.500h11" strokeDasharray="3 1" /></Svg>
        <Svg w={11} h={11} c="#bbb" sw={1}><rect width="11" height="7" fill="#bbb" /><path d="M0 9.500h11" strokeWidth="2" strokeDasharray="3 1" /></Svg>
        <Svg w={11} h={11} c="#666" sw={1}><rect width="11" height="11" fill="#666" /></Svg>
      </StatusCell>
    </StatusBar>

    <Taskbar>
      {taskIcons.map((ic, i) => <TaskIcon key={i} $w={i === 0 ? 36 : undefined}>{ic}</TaskIcon>)}
      <TaskIcon $w={36} $on><TableauTile size={14} /></TaskIcon>
      <Tray>
        <TaskIcon $w={36}>
          <Svg w={16} h={16} c="#eee" sw={1}><circle cx="10.5" cy="4" r="3" /><circle cx="4.5" cy="9" r="2.5" /><path d="M1 15.500c0-5 7-5 7 0M10 8c3 0 5 2 5 5" /></Svg>
        </TaskIcon>
        <TaskIcon $w={24}><Svg w={13} h={7} c="#eee" sw={1.2}><path d="M.5 6.500L6.500 1l6 5.500" /></Svg></TaskIcon>
        <TaskIcon $w={24}>
          <svg width="17" height="10" viewBox="0 0 17 10"><path d="M4 10a3.500 3.500 0 0 1-.5-7A4.500 4.500 0 0 1 12 3a3.500 3.500 0 0 1 1 7z" fill="#e8e8e8" /></svg>
        </TaskIcon>
        <TaskIcon $w={24}>
          <Svg w={16} h={9} c="#eee" sw={1}><rect x=".5" y=".5" width="13" height="8" /><rect x="2" y="2" width="5" height="5" fill="#eee" /><path d="M15 3v3" strokeWidth="1.5" /></Svg>
        </TaskIcon>
        <TaskIcon $w={26}>
          <Svg w={14} h={14} c="#ccc" sw={1}><path d="M.5 13.500A13 13 0 0 1 13.500.5M3.500 13.500a10 10 0 0 1 10-10M6.500 13.500a7 7 0 0 1 7-7M9.500 13.500a4 4 0 0 1 4-4" /></Svg>
        </TaskIcon>
        <TaskIcon $w={26}>
          <Svg w={23} h={12} c="#eee" sw={1}><path d="M.5.5h22v11H.5z" /><path d="M3 3.500h17M3 6h17" strokeDasharray="1 1" /><path d="M6 9h11" /></Svg>
        </TaskIcon>
        <Clock>1:23 AM</Clock>
        <TaskIcon $w={30}>
          <svg width="16" height="15" viewBox="0 0 16 15"><path d="M0 0h16v12H10l-2 3-2-3H0z" fill="#f2f2f2" /><path d="M3 3h10M3 6h10M3 9h6" stroke="#333" /></svg>
        </TaskIcon>
        <TaskIcon $w={18} />
      </Tray>
    </Taskbar>
  </Page>
);

export default App;
